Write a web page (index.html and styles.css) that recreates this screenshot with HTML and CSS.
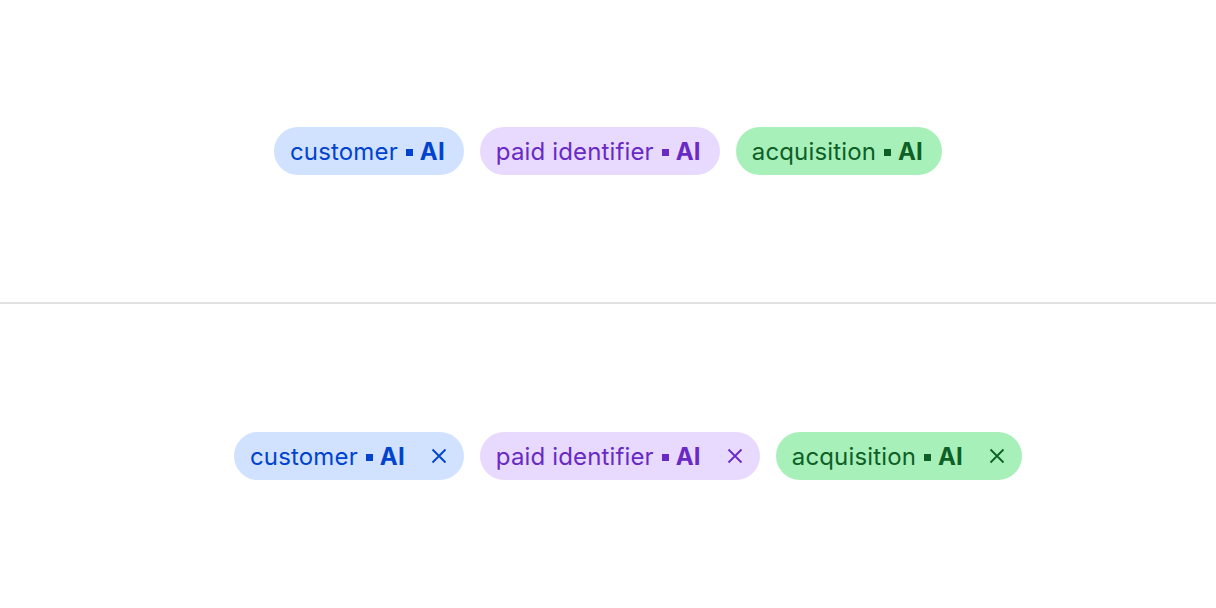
FILE: index.html
```html
<!DOCTYPE html>
<html lang="en">
<head>
<meta charset="utf-8">
<title>AI tags</title>
<link rel="stylesheet" href="styles.css">
</head>
<body>
  <section class="row row-top">
    <span class="tag tag-blue"><span class="tag-label">customer</span><span class="tag-dot"></span><span class="tag-ai">AI</span></span>
    <span class="tag tag-purple"><span class="tag-label">paid identifier</span><span class="tag-dot"></span><span class="tag-ai">AI</span></span>
    <span class="tag tag-green"><span class="tag-label">acquisition</span><span class="tag-dot"></span><span class="tag-ai">AI</span></span>
  </section>
  <section class="row row-bottom">
    <span class="tag tag-blue tag-dismiss"><span class="tag-label">customer</span><span class="tag-dot"></span><span class="tag-ai">AI</span><button class="tag-close" aria-label="Dismiss"><svg viewBox="0 0 16 16" width="16" height="16"><path d="M1.5 1.5L14.5 14.5M14.5 1.5L1.5 14.5" stroke="currentColor" stroke-width="1.8" fill="none"/></svg></button></span>
    <span class="tag tag-purple tag-dismiss"><span class="tag-label">paid identifier</span><span class="tag-dot"></span><span class="tag-ai">AI</span><button class="tag-close" aria-label="Dismiss"><svg viewBox="0 0 16 16" width="16" height="16"><path d="M1.5 1.5L14.5 14.5M14.5 1.5L1.5 14.5" stroke="currentColor" stroke-width="1.8" fill="none"/></svg></button></span>
    <span class="tag tag-green tag-dismiss"><span class="tag-label">acquisition</span><span class="tag-dot"></span><span class="tag-ai">AI</span><button class="tag-close" aria-label="Dismiss"><svg viewBox="0 0 16 16" width="16" height="16"><path d="M1.5 1.5L14.5 14.5M14.5 1.5L1.5 14.5" stroke="currentColor" stroke-width="1.8" fill="none"/></svg></button></span>
  </section>
</body>
</html>
```

FILE: styles.css
```css
html, body {
  margin: 0;
  padding: 0;
  background: #ffffff;
}
body {
  font-family: Inter, "Noto Sans", "Liberation Sans", sans-serif;
  width: 1216px;
  height: 608px;
  overflow: hidden;
}
.row {
  display: flex;
  justify-content: center;
  align-items: center;
  gap: 16px;
}
.row-top {
  height: 302px;
  border-bottom: 2px solid #e0e0e0;
}
.row-bottom {
  height: 304px;
  padding-left: 40px;
  box-sizing: border-box;
}
.tag {
  display: inline-flex;
  align-items: center;
  height: 48px;
  box-sizing: border-box;
  padding: 2px 19px 0 16px;
  border-radius: 24px;
  font-size: 24px;
  letter-spacing: 0.15px;
  line-height: 1;
  white-space: nowrap;
}
.tag-dismiss {
  padding-right: 13px;
}
.tag-label {
  font-weight: 400;
}
.tag-dot {
  width: 7px;
  height: 7px;
  margin: 0 7px 0 8px;
  background: currentColor;
}
.tag-ai {
  font-weight: 700;
}
.tag-close {
  display: flex;
  align-items: center;
  justify-content: center;
  width: 24px;
  height: 24px;
  margin: -2px 0 0 22px;
  padding: 0;
  border: 0;
  background: transparent;
  color: inherit;
  cursor: pointer;
}
.tag-blue {
  background: #d0e2ff;
  color: #0043ce;
}
.tag-purple {
  background: #e8daff;
  color: #6929c4;
}
.tag-green {
  background: #a7f0ba;
  color: #0e6027;
}
```
